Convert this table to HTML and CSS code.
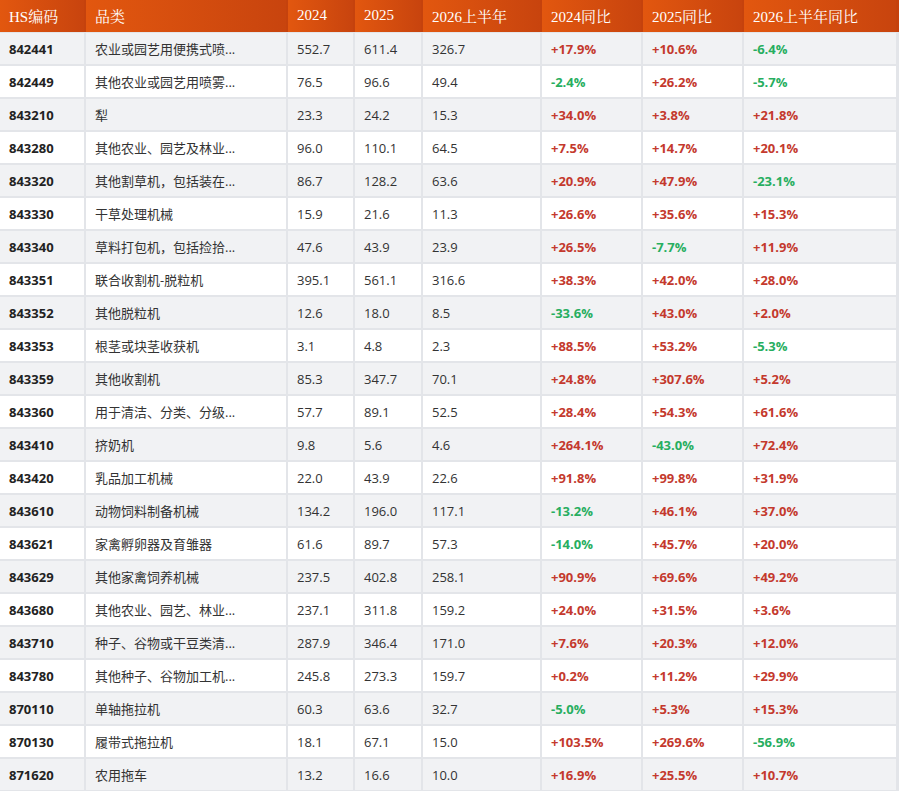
FILE: index.html
```html
<!DOCTYPE html>
<html lang="zh">
<head>
<meta charset="utf-8">
<link rel="stylesheet" href="styles.css">
</head>
<body>
<div class="tbl">
  <div class="row head">
    <div class="c">HS编码</div><div class="c">品类</div><div class="c">2024</div><div class="c">2025</div><div class="c">2026上半年</div><div class="c">2024同比</div><div class="c">2025同比</div><div class="c">2026上半年同比</div>
  </div>
  <div class="row"><div class="c code">842441</div><div class="c">农业或园艺用便携式喷...</div><div class="c">552.7</div><div class="c">611.4</div><div class="c">326.7</div><div class="c up">+17.9%</div><div class="c up">+10.6%</div><div class="c dn">-6.4%</div></div>
  <div class="row"><div class="c code">842449</div><div class="c">其他农业或园艺用喷雾...</div><div class="c">76.5</div><div class="c">96.6</div><div class="c">49.4</div><div class="c dn">-2.4%</div><div class="c up">+26.2%</div><div class="c dn">-5.7%</div></div>
  <div class="row"><div class="c code">843210</div><div class="c">犁</div><div class="c">23.3</div><div class="c">24.2</div><div class="c">15.3</div><div class="c up">+34.0%</div><div class="c up">+3.8%</div><div class="c up">+21.8%</div></div>
  <div class="row"><div class="c code">843280</div><div class="c">其他农业、园艺及林业...</div><div class="c">96.0</div><div class="c">110.1</div><div class="c">64.5</div><div class="c up">+7.5%</div><div class="c up">+14.7%</div><div class="c up">+20.1%</div></div>
  <div class="row"><div class="c code">843320</div><div class="c">其他割草机，包括装在...</div><div class="c">86.7</div><div class="c">128.2</div><div class="c">63.6</div><div class="c up">+20.9%</div><div class="c up">+47.9%</div><div class="c dn">-23.1%</div></div>
  <div class="row"><div class="c code">843330</div><div class="c">干草处理机械</div><div class="c">15.9</div><div class="c">21.6</div><div class="c">11.3</div><div class="c up">+26.6%</div><div class="c up">+35.6%</div><div class="c up">+15.3%</div></div>
  <div class="row"><div class="c code">843340</div><div class="c">草料打包机，包括捡拾...</div><div class="c">47.6</div><div class="c">43.9</div><div class="c">23.9</div><div class="c up">+26.5%</div><div class="c dn">-7.7%</div><div class="c up">+11.9%</div></div>
  <div class="row"><div class="c code">843351</div><div class="c">联合收割机-脱粒机</div><div class="c">395.1</div><div class="c">561.1</div><div class="c">316.6</div><div class="c up">+38.3%</div><div class="c up">+42.0%</div><div class="c up">+28.0%</div></div>
  <div class="row"><div class="c code">843352</div><div class="c">其他脱粒机</div><div class="c">12.6</div><div class="c">18.0</div><div class="c">8.5</div><div class="c dn">-33.6%</div><div class="c up">+43.0%</div><div class="c up">+2.0%</div></div>
  <div class="row"><div class="c code">843353</div><div class="c">根茎或块茎收获机</div><div class="c">3.1</div><div class="c">4.8</div><div class="c">2.3</div><div class="c up">+88.5%</div><div class="c up">+53.2%</div><div class="c dn">-5.3%</div></div>
  <div class="row"><div class="c code">843359</div><div class="c">其他收割机</div><div class="c">85.3</div><div class="c">347.7</div><div class="c">70.1</div><div class="c up">+24.8%</div><div class="c up">+307.6%</div><div class="c up">+5.2%</div></div>
  <div class="row"><div class="c code">843360</div><div class="c">用于清洁、分类、分级...</div><div class="c">57.7</div><div class="c">89.1</div><div class="c">52.5</div><div class="c up">+28.4%</div><div class="c up">+54.3%</div><div class="c up">+61.6%</div></div>
  <div class="row"><div class="c code">843410</div><div class="c">挤奶机</div><div class="c">9.8</div><div class="c">5.6</div><div class="c">4.6</div><div class="c up">+264.1%</div><div class="c dn">-43.0%</div><div class="c up">+72.4%</div></div>
  <div class="row"><div class="c code">843420</div><div class="c">乳品加工机械</div><div class="c">22.0</div><div class="c">43.9</div><div class="c">22.6</div><div class="c up">+91.8%</div><div class="c up">+99.8%</div><div class="c up">+31.9%</div></div>
  <div class="row"><div class="c code">843610</div><div class="c">动物饲料制备机械</div><div class="c">134.2</div><div class="c">196.0</div><div class="c">117.1</div><div class="c dn">-13.2%</div><div class="c up">+46.1%</div><div class="c up">+37.0%</div></div>
  <div class="row"><div class="c code">843621</div><div class="c">家禽孵卵器及育雏器</div><div class="c">61.6</div><div class="c">89.7</div><div class="c">57.3</div><div class="c dn">-14.0%</div><div class="c up">+45.7%</div><div class="c up">+20.0%</div></div>
  <div class="row"><div class="c code">843629</div><div class="c">其他家禽饲养机械</div><div class="c">237.5</div><div class="c">402.8</div><div class="c">258.1</div><div class="c up">+90.9%</div><div class="c up">+69.6%</div><div class="c up">+49.2%</div></div>
  <div class="row"><div class="c code">843680</div><div class="c">其他农业、园艺、林业...</div><div class="c">237.1</div><div class="c">311.8</div><div class="c">159.2</div><div class="c up">+24.0%</div><div class="c up">+31.5%</div><div class="c up">+3.6%</div></div>
  <div class="row"><div class="c code">843710</div><div class="c">种子、谷物或干豆类清...</div><div class="c">287.9</div><div class="c">346.4</div><div class="c">171.0</div><div class="c up">+7.6%</div><div class="c up">+20.3%</div><div class="c up">+12.0%</div></div>
  <div class="row"><div class="c code">843780</div><div class="c">其他种子、谷物加工机...</div><div class="c">245.8</div><div class="c">273.3</div><div class="c">159.7</div><div class="c up">+0.2%</div><div class="c up">+11.2%</div><div class="c up">+29.9%</div></div>
  <div class="row"><div class="c code">870110</div><div class="c">单轴拖拉机</div><div class="c">60.3</div><div class="c">63.6</div><div class="c">32.7</div><div class="c dn">-5.0%</div><div class="c up">+5.3%</div><div class="c up">+15.3%</div></div>
  <div class="row"><div class="c code">870130</div><div class="c">履带式拖拉机</div><div class="c">18.1</div><div class="c">67.1</div><div class="c">15.0</div><div class="c up">+103.5%</div><div class="c up">+269.6%</div><div class="c dn">-56.9%</div></div>
  <div class="row"><div class="c code">871620</div><div class="c">农用拖车</div><div class="c">13.2</div><div class="c">16.6</div><div class="c">10.0</div><div class="c up">+16.9%</div><div class="c up">+25.5%</div><div class="c up">+10.7%</div></div>
</div>
</body>
</html>
```
FILE: styles.css
```css
html, body {
  margin: 0;
  padding: 0;
  background: #e3e5e9;
}
.tbl {
  width: 899px;
  display: flex;
  flex-direction: column;
  gap: 2px;
  background: #e3e5e9;
  font-family: "Open Sans", "Noto Sans CJK SC", sans-serif;
  font-size: 13px;
  color: #333333;
}
.row {
  display: grid;
  grid-template-columns: 84px 200px 65px 66px 117px 99px 99px 152px;
  column-gap: 2px;
  height: 31px;
  padding-right: 3px;
}
.row .c {
  display: flex;
  align-items: center;
  padding: 0 9px;
  white-space: nowrap;
  overflow: hidden;
  background: #ffffff;
}
.row:nth-child(even) .c {
  background: #f1f2f4;
}
.head {
  height: 32px;
  background: #c5420d;
  margin-bottom: -1px;
}
.head .c,
.row.head .c {
  background: linear-gradient(to right, #e2570f, #c8440e);
  color: #ffffff;
  font-family: "Liberation Serif", "Noto Serif CJK SC", serif;
  font-size: 15px;
  padding-bottom: 1px;
}
.code {
  font-weight: 700;
  color: #222222;
}
.up {
  color: #c4392d;
  font-weight: 700;
}
.dn {
  color: #27ae60;
  font-weight: 700;
}
```
